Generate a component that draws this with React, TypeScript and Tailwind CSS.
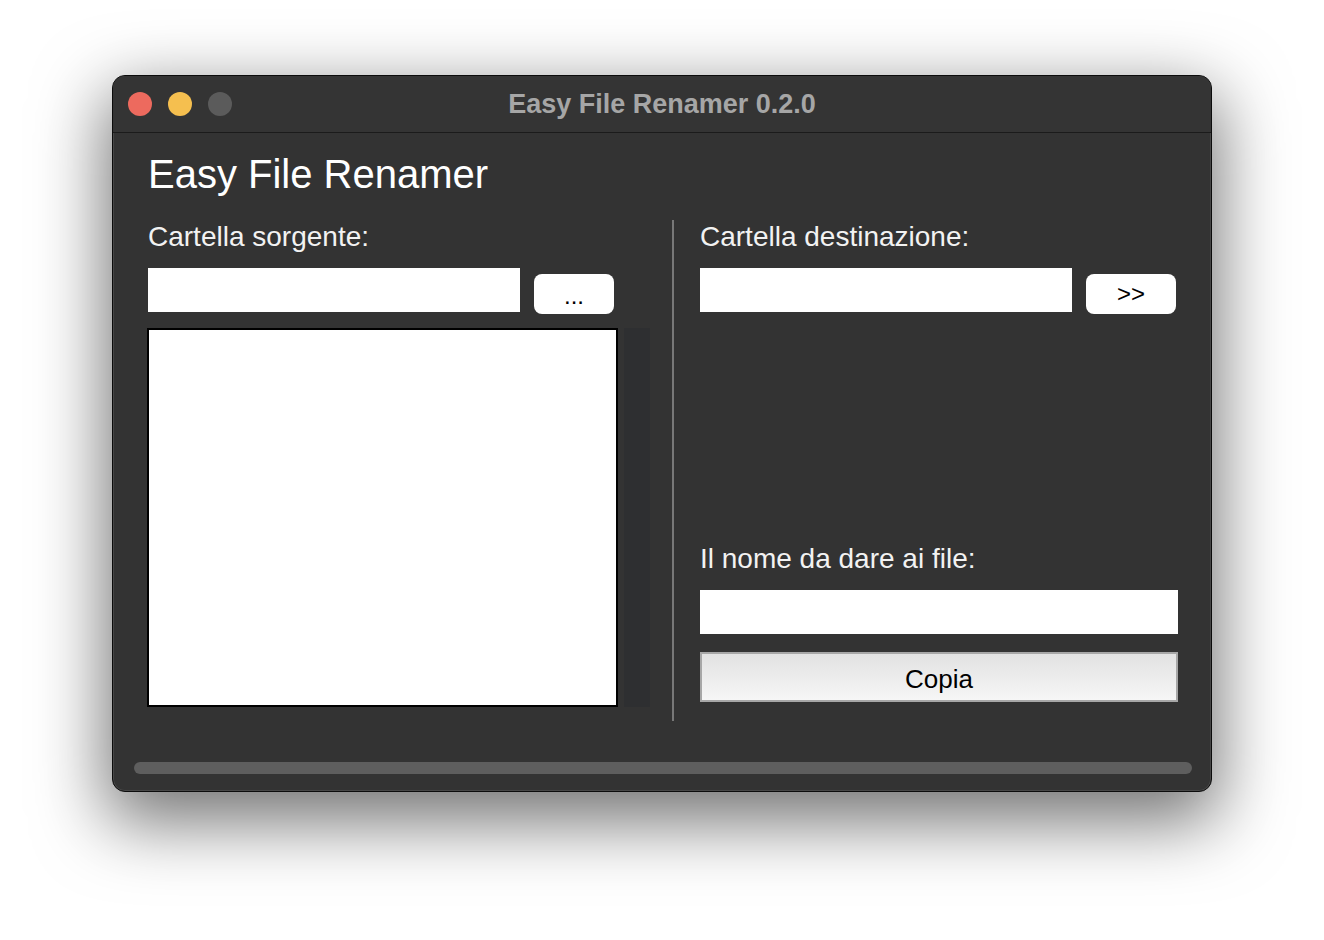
import React from "react";

const font = { fontFamily: '"Liberation Sans", Arial, sans-serif' };

function TrafficLights() {
  return (
    <div className="flex items-center gap-[16px] pl-[15px]">
      <span className="block w-[24px] h-[24px] rounded-full bg-[#ed6a5e]" />
      <span className="block w-[24px] h-[24px] rounded-full bg-[#f5bf4f]" />
      <span className="block w-[24px] h-[24px] rounded-full bg-[#5b5b5b]" />
    </div>
  );
}

function Field({ width }: { width: string }) {
  return <div className={`${width} h-[44px] bg-white`} />;
}

export default function App() {
  return (
    <div
      className="w-[1324px] h-[940px] bg-white pt-[75px] pl-[112px]"
      style={font}
    >
      <div className="w-[1100px] h-[717px] rounded-[13px] border border-[#0c0c0c] bg-[#333333] overflow-hidden flex flex-col shadow-[0_24px_70px_6px_rgba(0,0,0,0.55),inset_0_0_0_1px_rgba(255,255,255,0.1)]">
        {/* title bar */}
        <div className="h-[57px] shrink-0 grid grid-cols-[1fr_auto_1fr] items-center border-b border-[#1b1b1b] bg-[#343434]">
          <TrafficLights />
          <div className="text-[27px] font-bold text-[#a6a6a6] leading-none">
            Easy File Renamer 0.2.0
          </div>
          <div />
        </div>

        {/* content */}
        <div className="pl-[35px] pt-[21px]">
          <h1 className="text-[40px] leading-none h-[40px] text-white">
            Easy File Renamer
          </h1>

          <div className="mt-[26px] flex h-[501px]">
            {/* source column */}
            <div className="w-[502px] flex flex-col">
              <div className="mt-[3px] h-[28px] text-[28px] leading-none text-[#f2f2f2]">
                Cartella sorgente:
              </div>
              <div className="mt-[17px] flex items-start">
                <Field width="w-[372px]" />
                <button className="ml-[14px] mt-[6px] w-[80px] h-[40px] rounded-[8px] bg-white text-[24px] leading-none text-black flex items-center justify-center pt-[4px]">
                  ...
                </button>
              </div>
              <div className="mt-[14px] flex">
                <div className="-ml-[1px] w-[471px] h-[379px] border-2 border-black bg-white" />
                <div className="ml-[6px] w-[26px] h-[379px] bg-[#2e2f31]" />
              </div>
            </div>

            <div className="ml-[22px] w-[2px] h-full bg-[#787878]" />

            {/* destination column */}
            <div className="ml-[26px] w-[478px] flex flex-col">
              <div className="mt-[3px] h-[28px] text-[28px] leading-none text-[#f2f2f2]">
                Cartella destinazione:
              </div>
              <div className="mt-[17px] flex items-start">
                <Field width="w-[372px]" />
                <button className="ml-[14px] mt-[6px] w-[90px] h-[40px] rounded-[8px] bg-white text-[24px] leading-none text-black flex items-center justify-center">
                  &gt;&gt;
                </button>
              </div>
              <div className="mt-[231px] h-[28px] text-[28px] leading-none text-[#f2f2f2]">
                Il nome da dare ai file:
              </div>
              <div className="mt-[17px]">
                <Field width="w-[478px]" />
              </div>
              <button className="mt-[18px] w-[478px] h-[50px] border-2 border-[#a7a7a7] bg-linear-to-b from-[#e2e2e2] to-[#f6f6f6] text-[26px] leading-none text-black flex items-center justify-center pt-[3px]">
                Copia
              </button>
            </div>
          </div>
        </div>

        {/* progress bar */}
        <div className="pl-[21px] pr-[19px] mt-[41px]">
          <div className="h-[12px] rounded-full bg-[#5e5e5e]" />
        </div>
      </div>
    </div>
  );
}
